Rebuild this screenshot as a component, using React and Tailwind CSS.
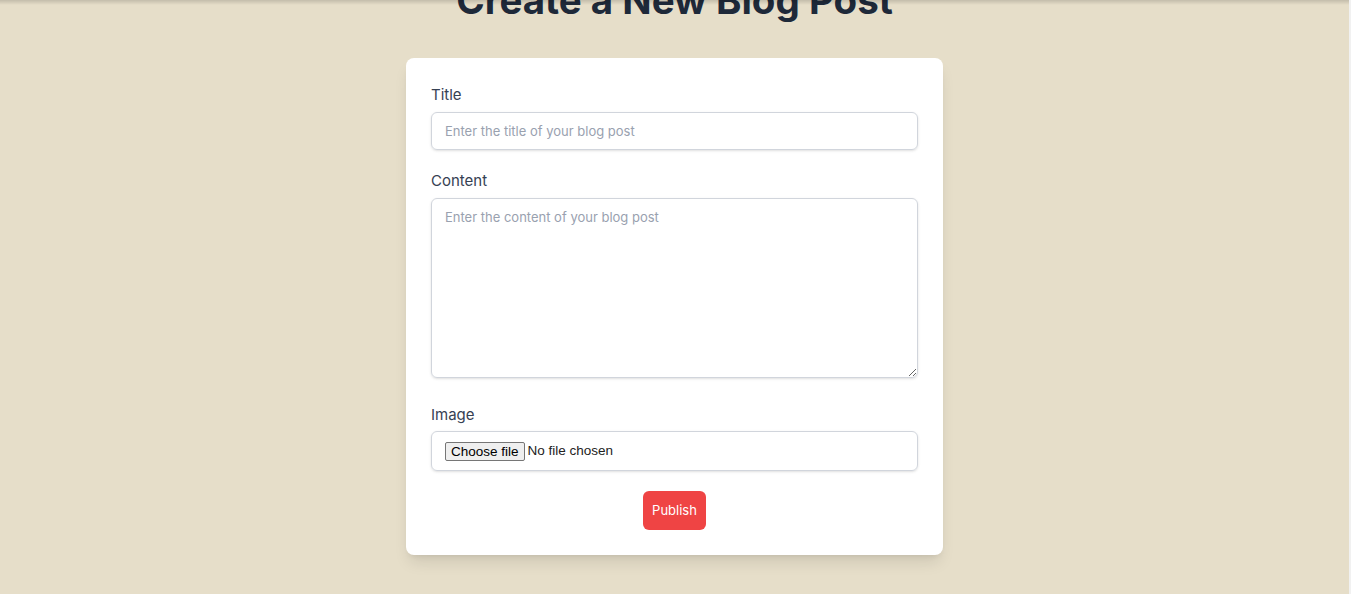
import React from 'react';

export default function App() {
  return (
    <div className="flex h-[594px] w-full overflow-hidden bg-[#e6dec9] font-['Inter',sans-serif]">
      <main className="relative flex-1">
        {/* shadow left by the header scrolled above */}
        <div className="absolute inset-x-0 top-0 h-[5px] bg-linear-to-b from-black/15 to-transparent" />

        <div className="mt-[-21px] flex flex-col items-center">
          <h1 className="mb-[36px] text-[38.5px] leading-[43px] font-bold text-gray-800">Create a New Blog Post</h1>

          <form className="w-[537px] rounded-lg bg-white px-[25px] pt-[26px] pb-[25px] shadow-lg">
            <div className="mb-5">
              <label className="mb-1.5 block text-[15px] leading-[22px] text-gray-700">Title</label>
              <input
                type="text"
                placeholder="Enter the title of your blog post"
                className="block w-full rounded-md border border-gray-300 px-[13px] py-2 text-[13px] leading-[20px] text-gray-700 shadow-sm outline-none placeholder:text-gray-400"
              />
            </div>

            <div className="mb-5">
              <label className="mb-1.5 block text-[15px] leading-[22px] text-gray-700">Content</label>
              <textarea
                placeholder="Enter the content of your blog post"
                className="h-[180px] w-full rounded-md border border-gray-300 px-[13px] py-2 text-[13px] leading-[20px] text-gray-700 shadow-sm outline-none placeholder:text-gray-400"
              />
            </div>

            <div className="mb-5">
              <label className="mb-[5px] block text-[15px] leading-[22px] text-gray-700">Image</label>
              <label className="flex h-10 w-full cursor-pointer items-center rounded-md border border-gray-300 px-[13px] font-['Liberation_Sans',Arial,sans-serif] text-[13.5px] text-[#222] shadow-sm">
                <input type="file" className="hidden" />
                <span className="rounded-[2px] border border-[#767676] bg-[#efefef] px-[5px] leading-[17px] text-black">Choose file</span>
                <span className="ml-[3px]">No file chosen</span>
              </label>
            </div>

            <div className="flex justify-center">
              <button
                type="button"
                className="rounded-md bg-[#ef4444] px-[9px] py-[10px] text-[13px] leading-[19px] text-white"
              >
                Publish
              </button>
            </div>
          </form>
        </div>
      </main>
      <div className="w-[2px] bg-[#f1f1f1]" />
    </div>
  );
}
